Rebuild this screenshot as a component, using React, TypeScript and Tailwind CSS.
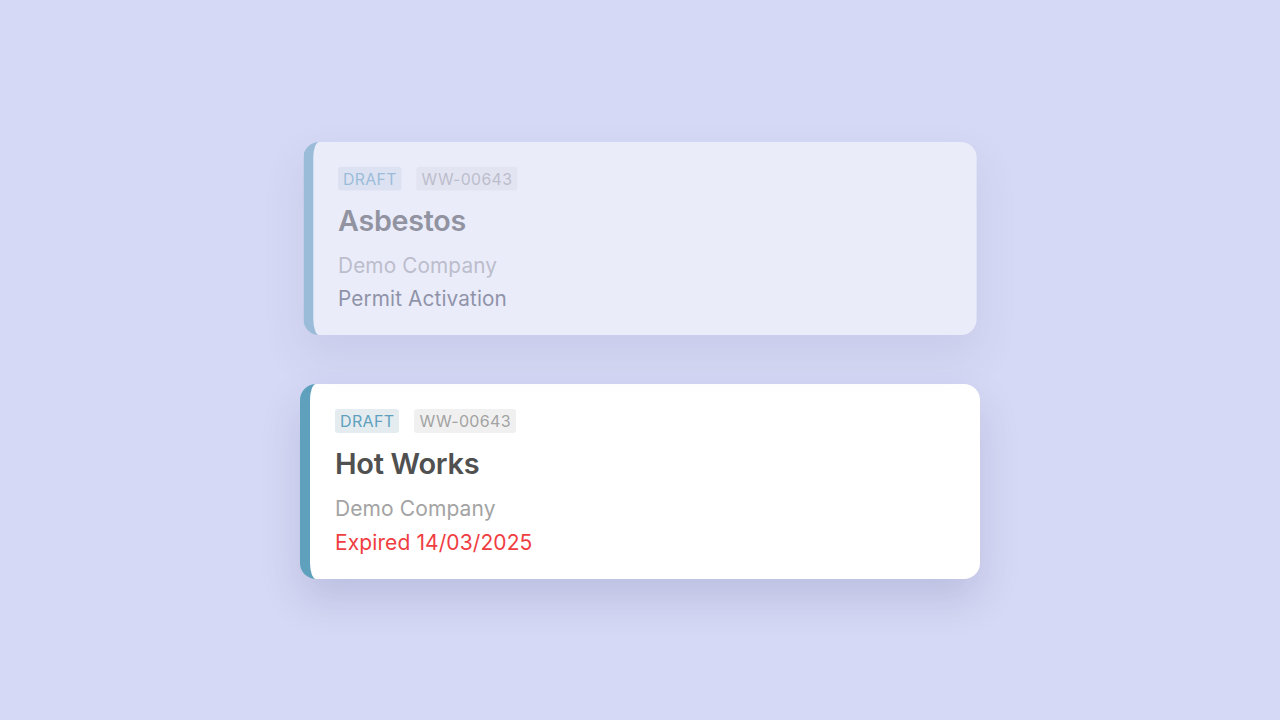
import React from "react";

type CardProps = {
  title: string;
  company: string;
  status: string;
  statusClass: string;
  faded?: boolean;
};

function Card({ title, company, status, statusClass, faded }: CardProps) {
  return (
    <div
      className={
        "w-[680px] h-[195px] rounded-2xl bg-white border-l-[10px] border-[#5fa1bd] pl-[25px] pt-[25px] shadow-[0_20px_40px_rgba(40,50,110,0.15)] flex flex-col " +
        (faded ? "opacity-50 scale-[0.99]" : "")
      }
    >
      <div className="flex items-center gap-[15px]">
        <span className="h-6 px-[5px] rounded-[3px] bg-[#e5ecf0] text-[#5fa1bd] text-[16px] leading-6 tracking-[0.35px]">DRAFT</span>
        <span className="h-6 px-[5px] rounded-[3px] bg-[#f0f0f0] text-[#a3a3a3] text-[16px] leading-6 tracking-[0.35px]">WW-00643</span>
      </div>
      <div className="mt-[14px] text-[29px] leading-[34px] font-semibold tracking-[-0.3px] text-[#505050]">{title}</div>
      <div className="mt-[13px] text-[21px] leading-[30px] tracking-[0.1px] text-[#a3a3a3]">{company}</div>
      <div className={"mt-[4px] text-[21px] leading-[30px] tracking-[0.1px] " + statusClass}>{status}</div>
    </div>
  );
}

export default function App() {
  return (
    <div
      className="w-full h-[720px] bg-[#d6d9f5] flex flex-col items-center justify-center gap-[48px] overflow-hidden"
      style={{ fontFamily: "Inter, 'Noto Sans', sans-serif" }}
    >
      <Card title="Asbestos" company="Demo Company" status="Permit Activation" statusClass="text-[#4a4f5c]" faded />
      <Card title="Hot Works" company="Demo Company" status="Expired 14/03/2025" statusClass="text-[#ef3e42]" />
    </div>
  );
}
